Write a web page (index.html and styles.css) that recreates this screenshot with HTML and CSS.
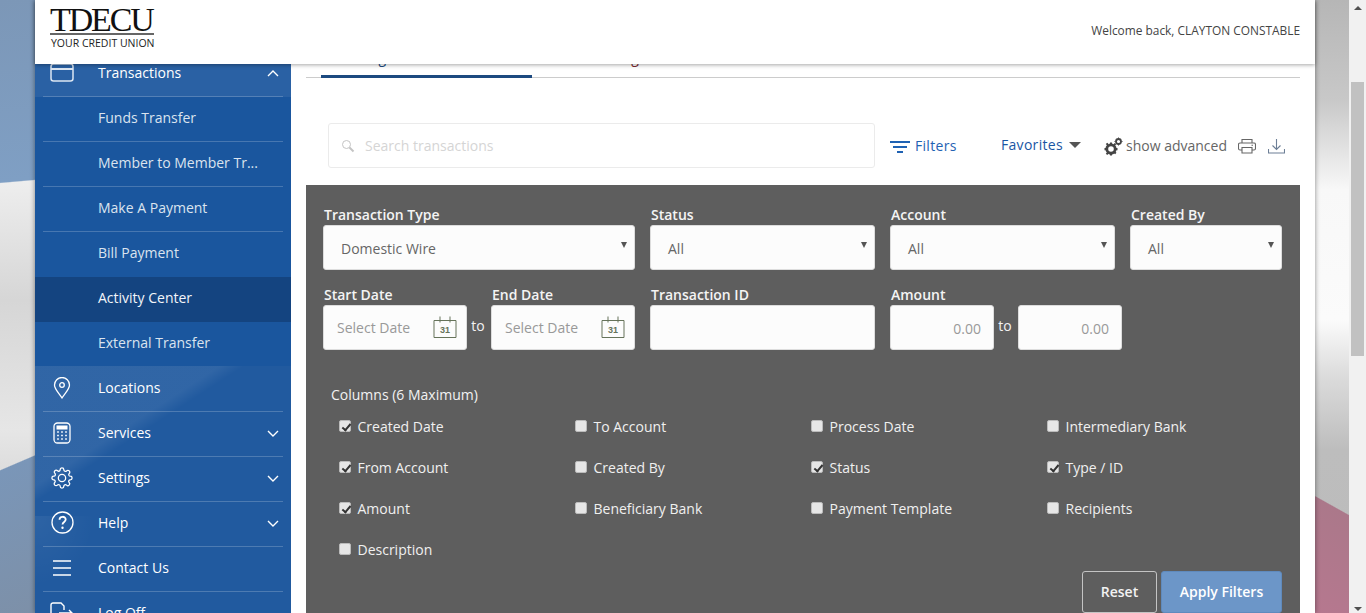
FILE: index.html
```html
<!DOCTYPE html>
<html lang="en">
<head>
<meta charset="utf-8">
<title>Activity Center</title>
<link rel="stylesheet" href="styles.css">
</head>
<body>
<div class="page">
  <div class="stage">
    <div class="shell">
      <header class="topbar">
        <div class="logo">
          <div class="logo-word">TDECU</div>
          <div class="logo-sub">YOUR CREDIT UNION</div>
        </div>
        <div class="welcome">Welcome back, CLAYTON CONSTABLE</div>
      </header>
      <div class="body">
        <nav class="side">
          <ul class="menu">
            <li class="row row-open">
              <span class="ico"><svg width="24" height="19" viewBox="0 0 24 19" fill="none" stroke="#dce6f2" stroke-width="1.500"><rect x="1" y="1" width="22" height="17" rx="2.500"/><path d="M1 6h22" stroke-width="2"/></svg></span>
              <span class="lbl">Transactions</span>
              <svg class="chev" width="12" height="7" viewBox="0 0 12 7" fill="none" stroke="#fff" stroke-width="1.400"><path d="M1 6l5-5 5 5"/></svg>
            </li>
            <li class="row sub"><span class="lbl">Funds Transfer</span></li>
            <li class="row sub"><span class="lbl">Member to Member Tr...</span></li>
            <li class="row sub"><span class="lbl">Make A Payment</span></li>
            <li class="row sub noline"><span class="lbl">Bill Payment</span></li>
            <li class="row sub active noline"><span class="lbl">Activity Center</span></li>
            <li class="row sub noline"><span class="lbl">External Transfer</span></li>
            <li class="row">
              <span class="ico"><svg width="18" height="22" viewBox="0 0 18 22" fill="none" stroke="#fff" stroke-width="1.300"><path d="M9 21C5 15 1.500 12 1.500 8a7.500 7.500 0 0 1 15 0c0 4-3.500 7-7.500 13z"/><circle cx="9" cy="8" r="2.300"/></svg></span>
              <span class="lbl">Locations</span>
            </li>
            <li class="row">
              <span class="ico"><svg width="18" height="22" viewBox="0 0 18 22" fill="none"><rect x="1" y="1" width="16" height="20" rx="3.500" stroke="#fff" stroke-width="1.300"/><rect x="3.500" y="3.500" width="11" height="4" fill="#fff"/><path d="M4 10h2M8 10h2M12 10h2M4 13.500h2M8 13.500h2M12 13.500h2M4 17h2M8 17h2M12 17h2" stroke="#dce6f2" stroke-width="1.500"/></svg></span>
              <span class="lbl">Services</span>
              <svg class="chev" width="12" height="7" viewBox="0 0 12 7" fill="none" stroke="#fff" stroke-width="1.400"><path d="M1 1l5 5 5-5"/></svg>
            </li>
            <li class="row">
              <span class="ico"><svg width="22" height="22" viewBox="0 0 24 24" fill="none" stroke="#fff" stroke-width="1.400"><circle cx="12" cy="12" r="4"/><path d="M19.400 15a1.700 1.700 0 0 0 .3 1.800l.1.100a2 2 0 1 1-2.900 2.900l-.1-.1a1.700 1.700 0 0 0-2.800 1.200V21a2 2 0 1 1-4 0v-.1a1.700 1.700 0 0 0-2.900-1.200l-.1.100a2 2 0 1 1-2.900-2.900l.1-.1a1.700 1.700 0 0 0-1.200-2.800H3a2 2 0 1 1 0-4h.1a1.700 1.700 0 0 0 1.200-2.900l-.1-.1a2 2 0 1 1 2.900-2.900l.1.100a1.700 1.700 0 0 0 1.800.3H9a1.700 1.700 0 0 0 1-1.500V3a2 2 0 1 1 4 0v.1a1.700 1.700 0 0 0 2.900 1.200l.1-.1a2 2 0 1 1 2.900 2.900l-.1.100a1.700 1.700 0 0 0-.3 1.800V9a1.700 1.700 0 0 0 1.500 1H21a2 2 0 1 1 0 4h-.1a1.700 1.700 0 0 0-1.500 1z"/></svg></span>
              <span class="lbl">Settings</span>
              <svg class="chev" width="12" height="7" viewBox="0 0 12 7" fill="none" stroke="#fff" stroke-width="1.400"><path d="M1 1l5 5 5-5"/></svg>
            </li>
            <li class="row">
              <span class="ico"><svg width="23" height="23" viewBox="0 0 23 23" fill="none" stroke="#fff" stroke-width="1.300"><circle cx="11.500" cy="11.500" r="10.500"/><path d="M8.500 8.800c0-4 6.200-4 6.200-.2 0 2.400-3.200 2.400-3.200 5" stroke-width="1.800"/><circle cx="11.500" cy="16.800" r=".6" stroke-width="1.200"/></svg></span>
              <span class="lbl">Help</span>
              <svg class="chev" width="12" height="7" viewBox="0 0 12 7" fill="none" stroke="#fff" stroke-width="1.400"><path d="M1 1l5 5 5-5"/></svg>
            </li>
            <li class="row">
              <span class="ico"><svg width="20" height="16" viewBox="0 0 20 16" stroke="#fff" stroke-width="1.400"><path d="M1 1h18M1 8h18M1 15h18"/></svg></span>
              <span class="lbl">Contact Us</span>
            </li>
            <li class="row">
              <span class="ico"><svg width="24" height="22" viewBox="0 0 24 22" fill="none" stroke="#fff" stroke-width="1.400"><path d="M14 8V4l-3-3H3a2 2 0 0 0-2 2v15a2 2 0 0 0 2 2h9a2 2 0 0 0 2-2v-3M9 11h13M19 8l3 3-3 3"/></svg></span>
              <span class="lbl">Log Off</span>
            </li>
          </ul>
        </nav>
        <main class="main">
          <div class="tabs">
            <div class="tab tab-on">Single Transactions</div>
            <div class="tab tab-off">Recurring Transactions</div>
          </div>
          <div class="tools">
            <div class="search">
              <svg width="14" height="14" viewBox="0 0 14 14" fill="none" stroke="#c4c4c4"><circle cx="5.500" cy="5.500" r="4"/><path d="M8.500 8.500l4 4" stroke-width="2"/></svg>
              <span>Search transactions</span>
            </div>
            <div class="filters">
              <svg width="20" height="14" viewBox="0 0 20 14" stroke="#1f62b3" stroke-width="2"><path d="M0 2h20M3 7h14M7 12h6"/></svg>
              <span>Filters</span>
            </div>
            <div class="favs"><span>Favorites</span><i class="caret"></i></div>
            <div class="adv">
              <svg width="19" height="19" viewBox="0 0 19 19" fill="#444"><circle cx="7" cy="12" r="4.200" fill="none" stroke="#444" stroke-width="2.800"/><path d="M6 5.500h2l.3 2h-2.600zM6 18.500h2l.3-2h-2.600zM.5 11h2v2.200h-2zM11.500 11h2v2.200h-2zM1.800 7l1.500-1.300 1.500 1.600-1.500 1.400zM9.500 15.800l1.500-1.400 1.500 1.300-1.400 1.500zM1.800 16.800l1.500 1.300 1.300-1.500-1.500-1.300zM10.800 6l1.400 1.300-1.400 1.600-1.500-1.400z"/><circle cx="14.500" cy="4.500" r="2.500" fill="none" stroke="#444" stroke-width="1.800"/><path d="M14 .5h1v1h-1zM14 7.500h1v1h-1zM10.500 4h1v1h-1zM17.500 4h1v1h-1z"/></svg>
              <span>show advanced</span>
            </div>
            <svg class="tool-ico" width="18" height="16" viewBox="0 0 18 16" fill="none" stroke="#666" stroke-width="1.100"><path d="M4 5V1.500h10V5M4 12H2a1.500 1.500 0 0 1-1.500-1.500v-4A1.500 1.500 0 0 1 2 5h14a1.500 1.500 0 0 1 1.500 1.500v4A1.500 1.500 0 0 1 16 12h-2"/><path d="M4 9.500h10v5.500H4z"/><path d="M13.500 7.300h1.500"/></svg>
            <svg class="tool-dl" width="17" height="16" viewBox="0 0 17 16" fill="none" stroke="#6d7f96" stroke-width="1.100"><path d="M8.500 1v10.500M4.500 7.500l4 4 4-4M.5 11v4h16v-4"/></svg>
          </div>
          <section class="panel">
            <div class="line">
              <div class="field w312"><label>Transaction Type</label><div class="box sel"><span>Domestic Wire</span><i class="arrow"></i></div></div>
              <div class="field w225"><label>Status</label><div class="box sel"><span>All</span><i class="arrow"></i></div></div>
              <div class="field w225"><label>Account</label><div class="box sel"><span>All</span><i class="arrow"></i></div></div>
              <div class="field w152"><label>Created By</label><div class="box sel"><span>All</span><i class="arrow"></i></div></div>
            </div>
            <div class="line line2">
              <div class="pair w312">
                <div class="field w144"><label>Start Date</label><div class="box date"><span class="ph">Select Date</span>
                  <svg width="24" height="22" viewBox="0 0 24 22" fill="none" stroke="#66735a"><path d="M1 4.500h22v17H1zM7 .5v6M17 .5v6"/><text x="12" y="17" text-anchor="middle" class="cal">31</text></svg></div></div>
                <span class="to">to</span>
                <div class="field w144"><label>End Date</label><div class="box date"><span class="ph">Select Date</span>
                  <svg width="24" height="22" viewBox="0 0 24 22" fill="none" stroke="#66735a"><path d="M1 4.500h22v17H1zM7 .5v6M17 .5v6"/><text x="12" y="17" text-anchor="middle" class="cal">31</text></svg></div></div>
              </div>
              <div class="field w225"><label>Transaction ID</label><div class="box"></div></div>
              <div class="pair">
                <div class="field w104"><label>Amount</label><div class="box num">0.00</div></div>
                <span class="to">to</span>
                <div class="field w104"><label class="blank">&nbsp;</label><div class="box num">0.00</div></div>
              </div>
            </div>
            <div class="cols-title">Columns (6 Maximum)</div>
            <div class="cols">
              <div class="col-item"><i class="cb on"></i>Created Date</div>
              <div class="col-item"><i class="cb"></i>To Account</div>
              <div class="col-item"><i class="cb"></i>Process Date</div>
              <div class="col-item"><i class="cb"></i>Intermediary Bank</div>
              <div class="col-item"><i class="cb on"></i>From Account</div>
              <div class="col-item"><i class="cb"></i>Created By</div>
              <div class="col-item"><i class="cb on"></i>Status</div>
              <div class="col-item"><i class="cb on"></i>Type / ID</div>
              <div class="col-item"><i class="cb on"></i>Amount</div>
              <div class="col-item"><i class="cb"></i>Beneficiary Bank</div>
              <div class="col-item"><i class="cb"></i>Payment Template</div>
              <div class="col-item"><i class="cb"></i>Recipients</div>
              <div class="col-item"><i class="cb"></i>Description</div>
            </div>
            <div class="actions">
              <button class="btn btn-reset">Reset</button>
              <button class="btn btn-apply">Apply Filters</button>
            </div>
          </section>
        </main>
      </div>
    </div>
  </div>
  <div class="scroll">
    <i class="up"></i>
    <div class="thumb"></div>
    <i class="down"></i>
  </div>
</div>
</body>
</html>
```
FILE: styles.css
```css
* { box-sizing: border-box; }
html, body { margin: 0; height: 100%; overflow: hidden; }
body { font-family: "Open Sans", "Liberation Sans", sans-serif; font-size: 14px; color: #555; }
ul { list-style: none; margin: 0; padding: 0; }

.page { display: flex; height: 613px; overflow: hidden; }
.stage {
  flex: 1;
  min-width: 0;
  padding: 0 34px 0 35px;
  overflow: hidden;
  background:
    linear-gradient(209.2deg, rgba(0,0,0,0) 0 81.4%, #ab788a 81.6%, #b6788f 100%) right 0 top 0 / 34px 100% no-repeat,
    linear-gradient(180deg, #b6b6b6 0, #c8c8c8 100px, #f8f8f8 190px, #fbfbfb 320px, #dcdcdc 375px, #bdbdbd 450px, #bbb 100%) right 0 top 0 / 34px 100% no-repeat,
    linear-gradient(156.8deg, rgba(0,0,0,0) 0 74.8%, #7a96b8 75%, #7d90a8 100%) left 0 top 0 / 35px 100% no-repeat,
    linear-gradient(175deg, #7c97b7 0, #7f9fc4 29.6%, rgba(0,0,0,0) 29.8%) left 0 top 0 / 35px 100% no-repeat,
    linear-gradient(180deg, #eee 180px, #d6d6d6 300px, #e6e6e6 430px, #ddd 470px) left 0 top 0 / 35px 100% no-repeat;
}
.shell { width: 1280px; height: 613px; display: flex; flex-direction: column; box-shadow: 0 0 5px rgba(0,0,0,.45); }

.topbar { position: relative; z-index: 2; height: 64px; flex: none; background: #fff; display: flex; justify-content: space-between; align-items: flex-start; padding: 0 15px; box-shadow: 0 1px 4px rgba(0,0,0,.35); }
.logo { margin-top: 4px; width: 104px; }
.logo-word { font-family: "Liberation Serif", serif; font-size: 34px; line-height: 31px; letter-spacing: -2.100px; color: #111; border-bottom: 2px solid #666; height: 31px; white-space: nowrap; }
.logo-sub { font-size: 10.500px; line-height: 13px; margin-top: 2px; color: #222; white-space: nowrap; padding-left: 1px; }
.welcome { font-size: 11.900px; line-height: 16px; margin-top: 22px; color: #444; }

.body { flex: 1; display: flex; min-height: 0; }
.side {
  width: 256px; flex: none; overflow: hidden; padding: 0 8px;
  background:
    linear-gradient(147deg, rgba(255,255,255,.07) 0 38%, rgba(255,255,255,0) 43%) 0 302px / 256px 150px no-repeat,
    radial-gradient(ellipse at 0 0, rgba(255,255,255,.06), rgba(255,255,255,0) 70%) 0 452px / 60px 70px no-repeat,
    linear-gradient(180deg, #1a569e 0 302px, #215a9f 302px);
}
.menu { margin-top: -12px; }
.row { height: 45px; display: flex; align-items: center; border-bottom: 1px solid rgba(255,255,255,.2); color: #fff; position: relative; }
.row.noline { border-bottom-color: transparent; }
.row-open::before, .sub.active::before { content: ""; position: absolute; left: -8px; right: -8px; top: 0; bottom: -1px; z-index: 0; }
.row-open::before { background: rgba(255,255,255,.07); }
.sub.active::before { background: #144480; }
.row > * { position: relative; z-index: 1; }
.ico { width: 38px; margin-right: 17px; margin-top: -3px; display: flex; justify-content: center; align-items: center; flex: none; }
.lbl { font-size: 14px; font-weight: 400; white-space: nowrap; margin-top: -3px; }
.sub .lbl { margin-left: 55px; color: #dbe4ef; }
.sub.active .lbl { color: #f2f5f9; }
.row > .chev { position: absolute; right: 4px; top: 18px; }

.main { flex: 1; min-width: 0; background: #fff; padding: 0 15px; overflow: hidden; }
.tabs { display: flex; height: 34px; margin-top: -20px; padding-left: 15px; border-bottom: 1px solid #ccc; }
.tab { width: 211px; height: 34px; line-height: 28px; white-space: nowrap; font-size: 14px; }
.tab-on { color: #1c4b82; border-bottom: 3px solid #1c4a80; text-align: center; padding-right: 10px; }
.tab-off { color: #7a2a33; padding-left: 44px; }

.tools { display: flex; align-items: center; height: 45px; margin-top: 45px; margin-left: 22px; }
.search { width: 547px; height: 45px; flex: none; border: 1px solid #ebebeb; border-radius: 3px; display: flex; align-items: center; gap: 10px; padding-left: 12px; color: #d5d5d5; background: #fff; }
.filters { display: flex; align-items: center; gap: 5px; margin-left: 15px; color: #1f62b3; width: 111px; flex: none; letter-spacing: .3px; }
.filters svg { margin-top: 3px; }
.favs { display: flex; align-items: center; gap: 6px; color: #1a56a3; width: 103px; flex: none; margin-top: -2px; letter-spacing: .3px; }
.caret { width: 0; height: 0; border: 6px solid transparent; border-top: 6px solid #555; border-bottom: 0; }
.adv { display: flex; align-items: center; gap: 3px; color: #666; flex: none; }
.adv svg { margin-top: 2px; }
.tool-ico { margin-left: 11px; flex: none; }
.tool-dl { margin-left: 12px; flex: none; }

.panel { margin-top: 17px; background: #5e5e5e; height: 428px; padding: 18px 18px 18px 17px; color: #f2f2f2; }
.line { display: flex; gap: 15px; }
.line2 { margin-top: 13px; }
.field label { display: block; font-size: 14px; font-weight: 600; line-height: 24px; height: 22px; color: #f4f4f4; padding-left: 1px; white-space: nowrap; }
.box { height: 45px; background: #fcfcfc; border: 1px solid #ddd; border-radius: 3px; display: flex; align-items: center; color: #666; padding: 0 13px 0 17px; position: relative; font-size: 14px; }
.sel span { margin-top: 1px; }
.arrow { position: absolute; right: 7px; top: 16px; width: 0; height: 0; border: 3px solid transparent; border-top: 6px solid #555; border-bottom: 0; }
.w312 { width: 312px; flex: none; }
.w225 { width: 225px; flex: none; }
.w152 { width: 152px; flex: none; }
.w144 { width: 144px; flex: none; }
.w104 { width: 104px; flex: none; }
.pair { display: flex; align-items: flex-start; }
.to { width: 24px; flex: none; text-align: center; font-size: 14px; line-height: 18px; margin-top: 34px; padding-right: 2px; color: #f2f2f2; }
.date { justify-content: space-between; padding: 0 10px 0 13px; }
.date svg { margin-right: -1px; margin-top: -1px; }
.ph, .num { color: #999; }
.ph { margin-top: -1px; }
.num { justify-content: flex-end; font-size: 14px; padding-right: 12px; padding-top: 2px; }
.cal { font-family: "Liberation Sans", sans-serif; font-size: 9px; font-weight: 700; fill: #66735a; stroke: none; }

.cols-title { margin: 35px 0 0 8px; line-height: 20px; color: #f2f2f2; }
.cols { display: grid; grid-template-columns: repeat(4, 236px); grid-auto-rows: 41px; margin: 2px 0 0 16px; }
.col-item { display: flex; align-items: center; gap: 6.500px; line-height: 20px; color: #f0f0f0; height: 41px; padding-bottom: 1px; white-space: nowrap; }
.cb { width: 12px; height: 12px; flex: none; background: #e6e6e6; border: 1px solid #bbb; border-radius: 2px; position: relative; margin-top: -2px; }
.cb.on::after { content: ""; position: absolute; left: 3.500px; top: .5px; width: 3px; height: 7px; border: solid #333; border-width: 0 2px 2px 0; transform: rotate(40deg); }

.actions { display: flex; justify-content: flex-end; gap: 4px; margin-top: 0; }
.btn { height: 42px; font-family: inherit; font-size: 14px; font-weight: 600; border-radius: 3px; padding: 0 0 1px; }
.btn-reset { width: 75px; background: #5e5e5e; color: #f2f2f2; border: 1px solid #c4c4c4; }
.btn-apply { width: 121px; background: #6c96c8; color: #fff; border: 1px solid #5f8abd; }

.scroll { width: 17px; flex: none; background: #f1f1f1; position: relative; }
.thumb { position: absolute; left: 2px; right: 2px; top: 82px; height: 274px; background: #c1c1c1; }
.up, .down { position: absolute; left: 5px; width: 0; height: 0; border: 4px solid transparent; }
.up { top: 6px; border-bottom: 4px solid #505050; border-top: 0; }
.down { bottom: 2px; border-top: 4px solid #505050; border-bottom: 0; }
```
